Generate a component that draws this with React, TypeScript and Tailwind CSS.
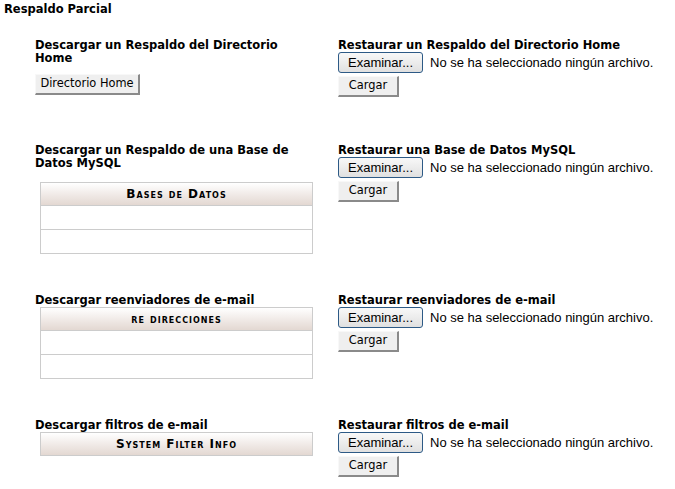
import React from 'react'

const verdana = "font-['DejaVu_Sans',Verdana,sans-serif]"
const arial = "font-['Liberation_Sans',Arial,sans-serif]"

const ClassicButton = ({ label, w }: { label: string; w: string }) => (
  <button
    className={`${verdana} ${w} block h-[21px] text-[11.4px] text-black bg-[#efefef] border-t border-l border-t-[#f8f8f8] border-l-[#f8f8f8] border-b-2 border-r-2 border-b-[#8a8a8a] border-r-[#8a8a8a] leading-none`}
  >
    {label}
  </button>
)

const FilePicker = () => (
  <div className="flex items-center h-[21px]">
    <button
      className={`${arial} block w-[85px] h-[21px] text-[13px] text-black rounded-[3px] border border-[#2d5a86] bg-gradient-to-b from-[#f8f8f8] to-[#e0e0e0] leading-none`}
    >
      Examinar...
    </button>
    <span className={`${arial} ml-[7px] text-[13px] leading-none text-black`}>No se ha seleccionado ningún archivo.</span>
  </div>
)

const Restore = ({ title }: { title: string }) => (
  <div className="flex flex-col">
    <div className={`${verdana} font-bold text-[11.5px] leading-[13px] text-black whitespace-nowrap`}>{title}</div>
    <FilePicker />
    <div className="flex mt-[3px]">
      <ClassicButton label="Cargar" w="w-[61px]" />
    </div>
  </div>
)

const HeaderCell = ({ label }: { label: string }) => (
  <div
    className={`${verdana} h-[22px] flex items-center justify-center font-bold text-[12px] tracking-[1px] leading-none text-black [font-variant:small-caps] bg-gradient-to-b from-white via-[#f1ebe8] to-[#e3d8d2]`}
  >
    {label}
  </div>
)

const DataTable = ({ label, rows }: { label: string; rows: number }) => (
  <div className="ml-[5px] w-[273px] border border-[#cccccc] bg-white">
    <HeaderCell label={label} />
    {Array.from({ length: rows }).map((_, i) => (
      <div key={i} className="h-[24px] border-t border-[#cccccc]" />
    ))}
  </div>
)

const Heading = ({ children }: { children: React.ReactNode }) => (
  <div className={`${verdana} font-bold text-[11.5px] leading-[13px] text-black w-[272px]`}>{children}</div>
)

const App = () => {
  return (
    <div className="w-[675px] h-[489px] bg-white overflow-hidden">
      <div className={`${verdana} font-bold text-[11.5px] leading-[13px] text-black pl-[4px] pt-[3px]`}>
        Respaldo Parcial
      </div>

      <div className="flex flex-col pl-[35px]">
        <div className="flex items-start mt-[23px]">
          <div className="w-[303px] shrink-0">
            <Heading>Descargar un Respaldo del Directorio Home</Heading>
            <div className="flex mt-[9px]">
              <ClassicButton label="Directorio Home" w="w-[105px]" />
            </div>
          </div>
          <Restore title="Restaurar un Respaldo del Directorio Home" />
        </div>

        <div className="flex items-start mt-[47px]">
          <div className="w-[303px] shrink-0">
            <Heading>Descargar un Respaldo de una Base de Datos MySQL</Heading>
            <div className="mt-[12px]">
              <DataTable label="Bases de Datos" rows={2} />
            </div>
          </div>
          <Restore title="Restaurar una Base de Datos MySQL" />
        </div>

        <div className="flex items-start mt-[40px]">
          <div className="w-[303px] shrink-0">
            <Heading>Descargar reenviadores de e-mail</Heading>
            <DataTable label="re direcciones" rows={2} />
          </div>
          <Restore title="Restaurar reenviadores de e-mail" />
        </div>

        <div className="flex items-start mt-[40px]">
          <div className="w-[303px] shrink-0">
            <Heading>Descargar filtros de e-mail</Heading>
            <DataTable label="System Filter Info" rows={0} />
          </div>
          <Restore title="Restaurar filtros de e-mail" />
        </div>
      </div>
    </div>
  )
}

export default App
